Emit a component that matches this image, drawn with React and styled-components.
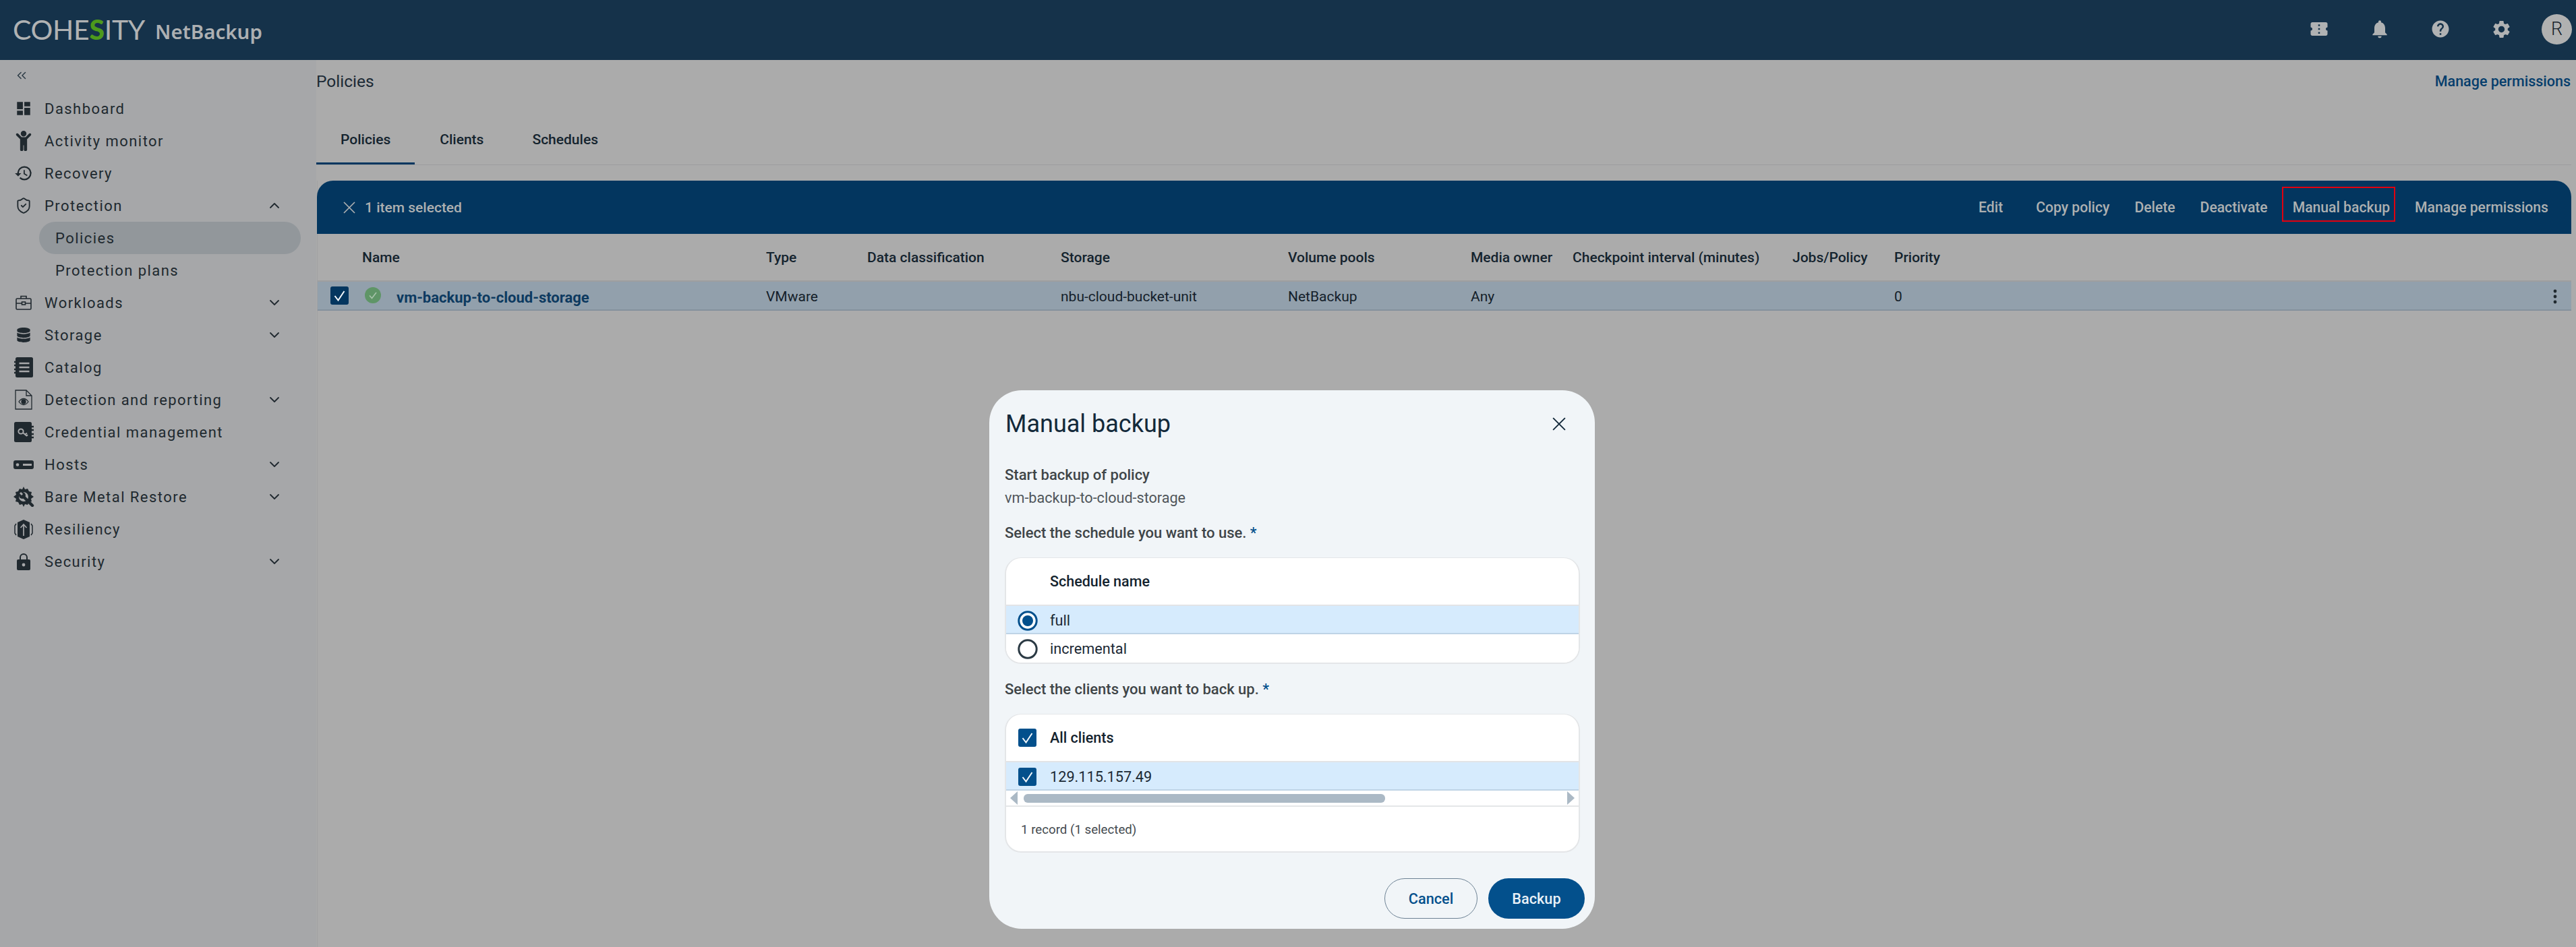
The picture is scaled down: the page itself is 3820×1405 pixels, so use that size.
import React from "react";
import styled, { createGlobalStyle } from "styled-components";
import { MdDashboard, MdHistory, MdConfirmationNumber, MdNotifications, MdHelp, MdSettings } from "react-icons/md";
import { FaDatabase, FaChild } from "react-icons/fa";
import { ChevronDown, ChevronUp, ChevronsLeft, ShieldCheck } from "lucide-react";

const Global = createGlobalStyle`
  html, body { margin: 0; padding: 0; }
  body { font-family: Roboto, "Liberation Sans", sans-serif; background: #ababab; }
  * { box-sizing: border-box; }
`;

const Page = styled.div`
  position: relative; width: 3820px; height: 1405px; overflow: hidden;
  display: flex; flex-direction: column; background: #ababab; color: #20292f;
`;
const TopBar = styled.header`
  height: 89px; flex: none; background: #15324a; display: flex; align-items: center;
  padding: 0 6px 0 19px; color: #adb0b2;
`;
const Logo = styled.div`
  font-family: Lato, sans-serif; font-size: 41px; font-weight: 400; letter-spacing: -.3px; line-height: 1;
  margin-top: -3px; color: #b0b2b3;
`;
const LogoS = styled.span` color: #4d9a1c; font-weight: 900; `;
const Product = styled.div`
  font-family: "Noto Sans", sans-serif; font-size: 29.5px; font-weight: 600; margin-left: 15px; margin-top: 3px;
`;
const TopIcons = styled.div` margin-left: auto; display: flex; align-items: center; `;
const TopIcon = styled.span`
  display: flex; width: 90px; justify-content: center; color: #b0b2b3; margin-top: -3px;
`;
const Avatar = styled.div`
  width: 45px; height: 45px; border-radius: 50%; background: #b0b1b1; color: #16222b;
  display: flex; align-items: center; justify-content: center; font-size: 27px; font-weight: 300; margin-left: 15px; margin-top: -3px;
`;
const Body = styled.div` flex: 1; display: flex; min-height: 0; `;
const Side = styled.nav` width: 469px; flex: none; background: #a6a7a9; `;
const Collapse = styled.div` height: 48px; padding: 0 0 2px 21px; display: flex; align-items: center; color: #2b3a44; `;
const NavRow = styled.div`
  height: 48px; display: flex; align-items: center; padding: 0 50px 0 16px; font-size: 22px; letter-spacing: 1.45px; color: #20292f;
`;
const NavIcon = styled.span` width: 38px; display: flex; justify-content: center; margin-right: 12px; color: #20292f; `;
const Caret = styled.span` margin-left: auto; width: 24px; display: flex; justify-content: center; color: #20292f; `;
const SubRow = styled.div`
  height: 48px; margin: 0 23px 0 58px; padding-left: 24px; display: flex; align-items: center; border-radius: 24px;
  font-size: 22px; letter-spacing: 1.45px; background: ${p => (p.$active ? "#92979b" : "transparent")};
`;
const Main = styled.main` flex: 1; min-width: 0; padding-right: 7px; display: flex; flex-direction: column; `;
const TitleRow = styled.div` height: 62px; display: flex; align-items: center; justify-content: space-between; `;
const Title = styled.h1` margin: 0; font-size: 24.5px; font-weight: 400; color: #1c2a35; `;
const Link = styled.a` font-size: 21.5px; font-weight: 500; color: #063e6c; margin-right: 1px; `;
const Tabs = styled.div` margin-top: 21px; height: 73px; display: flex; border-bottom: 1px solid #9c9d9f; `;
const Tab = styled.div`
  padding: 0 36px; height: 72px; margin-right: ${p => (p.$active ? "1px" : "0")}; display: flex; align-items: center; font-size: 21px; font-weight: 500; color: #14232e;
  border-bottom: 3px solid ${p => (p.$active ? "#03365f" : "transparent")};
  margin-bottom: -1px;
`;
const Panel = styled.section` margin-top: 23px; margin-left: 1px; flex: 1; border-left: 1px solid #a0a1a3; `;
const SelectBar = styled.div`
  height: 79px; background: #03365f; border-radius: 24px 24px 0 0; margin-left: -1px; display: flex; align-items: center;
  padding: 0 34px 0 39px; color: #adb0b1; font-size: 21px;
`;
const Selected = styled.div` display: flex; align-items: center; gap: 14px; font-weight: 500; `;
const Actions = styled.div` margin-left: auto; display: flex; gap: 37px; align-items: center; font-size: 21.15px; `;
const Action = styled.span`
  position: relative; font-weight: 500; line-height: 32px; margin-right: ${p => (p.$spaced ? "12px" : 0)};
  ${p => p.$marked && `&::after { content: ""; position: absolute; left: -16px; right: -8px; top: -15px; bottom: -5px; border: 2px solid #e2000f; }`}
`;
const Cols = "66px 599px 150px 287px 337px 271px 151px 326px 151px 1fr 60px";
const HeadGrid = styled.div`
  height: 71px; display: grid; grid-template-columns: ${Cols}; align-items: center; font-size: 21px; font-weight: 500; color: #14232e;
  border-bottom: 2px solid #9d9e9f;
`;
const RowGrid = styled.div`
  height: 43px; padding-top: 2px; display: grid; grid-template-columns: ${Cols}; align-items: center; font-size: 21px; color: #14202a;
  background: #92a0ac; border-bottom: 2px solid #84919d;
`;
const SelectCell = styled.div` padding-left: 19px; display: flex; margin-top: -2px; `;
const NameCell = styled.div` display: flex; align-items: center; gap: 23px; padding-left: 4px; `;
const NameLink = styled.span` font-size: 22px; font-weight: 700; color: #0d3a60; margin-top: 4px; `;
const MoreCell = styled.div` display: flex; justify-content: flex-end; padding-right: 21px; color: #20292f; `;

const Modal = styled.div`
  position: absolute; left: 1467px; top: 579px; width: 898px; height: 799px; border-radius: 48px;
  background: #f1f5f8; padding: 0 22px 0 23px; display: flex; flex-direction: column;
`;
const ModalHead = styled.div` height: 100px; display: flex; align-items: center; justify-content: space-between; padding: 0 21px 0 1px; `;
const ModalTitle = styled.h2` margin: 0; font-size: 36px; font-weight: 400; color: #13293a; `;
const Label = styled.div`
  line-height: 34px; font-size: 22px; font-weight: 500; color: #3f4548; margin-top: ${p => p.$mt || 0}px;
`;
const Req = styled.span` color: #03508c; `;
const Value = styled.div` line-height: 34px; font-size: 21.6px; color: #50565a; `;
const Card = styled.div`
  margin-top: 19px; background: #fff; border: 2px solid #e4e6e8; border-top-width: 1px; border-radius: 24px; overflow: hidden;
`;
const CardHead = styled.div`
  height: 71px; display: flex; align-items: center; font-size: 21.5px; font-weight: 500; color: #14232e;
  padding-left: ${p => (p.$check ? "18px" : "65px")}; gap: 20px; border-bottom: 2px solid #e2e4e6;
`;
const CardRow = styled.div`
  height: 42px; display: flex; align-items: center; font-size: 21.7px; color: #1c2a35;
  padding: ${p => (p.$on ? "3px" : "1px")} 0 0 ${p => (p.$box ? "18px" : "17px")}; gap: ${p => (p.$box ? "20px" : "18px")};
  background: ${p => (p.$on ? "#d6ebfd" : "#fff")};
  border-bottom: ${p => (p.$on ? "2px solid #bfd4e6" : "none")};
`;
const ScrollBar = styled.div`
  height: 24px; display: flex; align-items: center; padding: 0 6px; border-bottom: 2px solid #e4e6e8; gap: 9px;
`;
const Thumb = styled.div` width: 536px; height: 13px; border-radius: 6px; background: #abb9c5; `;
const ScrollEnd = styled.svg` margin-left: ${p => (p.$end ? "auto" : 0)}; `;
const Records = styled.div` height: 66px; padding: 2px 0 0 22px; display: flex; align-items: center; font-size: 18.7px; color: #444b50; `;
const Footer = styled.div` margin-top: 38px; display: flex; justify-content: flex-end; gap: 16px; margin-right: -7px; `;
const Btn = styled.button`
  height: 60px; width: ${p => p.$w}px; border-radius: 30px; font: 500 21.7px Roboto, sans-serif; padding: 0;
  border: ${p => (p.$primary ? "none" : "1px solid #6d8294")}; color: ${p => (p.$primary ? "#e9f1f7" : "#03508c")};
  background: ${p => (p.$primary ? "#03508c" : "transparent")};
`;
const BoxTick = styled.svg` flex: none; display: block; `;
const StatusMark = styled.svg` flex: none; margin-top: -4px; `;

const Check = ({ color = "#03508c", size = 27 }) => (
  <BoxTick width={size} height={size} viewBox="0 0 27 27">
    <rect width="27" height="27" rx="3" fill={color} />
    <path d="M6.5 14l5 6.5L20.5 7" fill="none" stroke="#f4f8fb" strokeWidth="2" />
  </BoxTick>
);
const Radio = ({ on }) => (
  <BoxTick width="30" height="30" viewBox="0 0 30 30">
    <circle cx="15" cy="15" r="13.2" fill="#fff" stroke={on ? "#03508c" : "#2b3a44"} strokeWidth="3" />
    {on && <circle cx="15" cy="15" r="8" fill="#03508c" />}
  </BoxTick>
);
const Cross = ({ s = 18, c = "currentColor" }) => (
  <svg width={s} height={s} viewBox="0 0 18 18"><path d="M1 1l16 16M17 1L1 17" stroke={c} strokeWidth="1.7" fill="none" /></svg>
);
const Status = () => (
  <StatusMark width="24" height="24" viewBox="0 0 24 24">
    <circle cx="12" cy="12" r="12" fill="#5f9567" />
    <path d="M7 12.5l3.5 4L17 8" stroke="#a9c4ac" strokeWidth="1.6" fill="none" />
  </StatusMark>
);
const Kebab = () => (
  <svg width="6" height="22" viewBox="0 0 6 22"><circle cx="3" cy="3" r="2.4" fill="#20292f" /><circle cx="3" cy="11" r="2.4" fill="#20292f" /><circle cx="3" cy="19" r="2.4" fill="#20292f" /></svg>
);
const Briefcase = () => (
  <svg width="24" height="22" viewBox="0 0 24 22" fill="none" stroke="#20292f" strokeWidth="1.6">
    <rect x="1" y="5" width="22" height="16" rx="1.5" /><path d="M8 5V1.5h8V5M1 12h8.5M14.5 12H23" /><rect x="9.5" y="10" width="5" height="4" />
  </svg>
);
const Catalog = () => (
  <svg width="28" height="30" viewBox="0 0 28 30">
    <rect x="2" y="0" width="26" height="30" rx="2.5" fill="#20292f" />
    <path d="M0 7h4M0 12h4M0 18h4M0 23h4" stroke="#20292f" strokeWidth="2.4" />
    <path d="M7.5 9h15M7.5 15h15M7.5 21h15" stroke="#a6a7a9" strokeWidth="2.6" />
  </svg>
);
const DocEye = () => (
  <svg width="26" height="30" viewBox="0 0 26 30" fill="none" stroke="#20292f" strokeWidth="1.3">
    <path d="M1 1h16l8 8v20H1zM17 1v8h8" />
    <path d="M6 18c4-6 10-6 14 0-4 6-10 6-14 0z" /><circle cx="13" cy="18" r="3" fill="#20292f" />
  </svg>
);
const KeyBook = () => (
  <svg width="29" height="30" viewBox="0 0 29 30">
    <rect x="0" y="0" width="26" height="30" rx="2.5" fill="#20292f" />
    <path d="M26 7h3M26 12h3M26 18h3M26 23h3" stroke="#20292f" strokeWidth="2.4" />
    <circle cx="10" cy="14" r="3.6" fill="none" stroke="#a6a7a9" strokeWidth="2" />
    <path d="M13 16l6 5M16.5 18.5l2.5-2M18.5 20.5l1.5-1.5" stroke="#a6a7a9" strokeWidth="2" />
  </svg>
);
const HostBar = () => (
  <svg width="30" height="13" viewBox="0 0 30 13">
    <rect width="30" height="13" rx="3" fill="#20292f" /><circle cx="6" cy="6.5" r="2.3" fill="#a6a7a9" /><rect x="14" y="5" width="13" height="3" fill="#a6a7a9" />
  </svg>
);
const GearWrench = () => (
  <svg width="31" height="30" viewBox="0 0 31 30">
    <path d="M15 0l2 4 4-1 2 4 4 1-1 4 4 3-4 3 1 4-4 1-2 4-4-1-2 4-2-4-4 1-2-4-4-1 1-4-4-3 4-3-1-4 4-1 2-4 4 1z" fill="#20292f" />
    <circle cx="15" cy="15" r="7" fill="#a6a7a9" />
    <circle cx="13" cy="13" r="5" fill="#20292f" />
    <path d="M10 9l3 3" stroke="#a6a7a9" strokeWidth="3" />
    <path d="M16 16l12 12" stroke="#20292f" strokeWidth="4.4" strokeLinecap="round" />
  </svg>
);
const Resilience = () => (
  <svg width="28" height="29" viewBox="0 0 28 29">
    <path d="M14 0l9 4v21l-9 4-9-4V4z" fill="#20292f" />
    <path d="M14 24V7M9.5 12L14 7l4.5 5" stroke="#a6a7a9" strokeWidth="1.7" fill="none" />
    <path d="M3 6L1 9v11l2 3M25 6l2 3v11l-2 3" stroke="#20292f" strokeWidth="1.5" fill="none" />
  </svg>
);
const Lock = () => (
  <svg width="20" height="25" viewBox="0 0 20 25">
    <path d="M5 10V6a5 5 0 0 1 10 0v4" fill="none" stroke="#20292f" strokeWidth="2" />
    <rect y="9" width="20" height="16" rx="2" fill="#20292f" /><circle cx="10" cy="17" r="2.4" fill="#a6a7a9" />
  </svg>
);

const nav = [
  { t: "Dashboard", i: <MdDashboard size={26} /> },
  { t: "Activity monitor", i: <FaChild size={30} /> },
  { t: "Recovery", i: <MdHistory size={28} /> },
  { t: "Protection", i: <ShieldCheck size={26} strokeWidth={1.7} />, c: "up" },
  { sub: "Policies", active: true },
  { sub: "Protection plans" },
  { t: "Workloads", i: <Briefcase />, c: "down" },
  { t: "Storage", i: <FaDatabase size={22} />, c: "down" },
  { t: "Catalog", i: <Catalog /> },
  { t: "Detection and reporting", i: <DocEye />, c: "down" },
  { t: "Credential management", i: <KeyBook /> },
  { t: "Hosts", i: <HostBar />, c: "down" },
  { t: "Bare Metal Restore", i: <GearWrench />, c: "down" },
  { t: "Resiliency", i: <Resilience /> },
  { t: "Security", i: <Lock />, c: "down" },
];

const heads = ["Type", "Data classification", "Storage", "Volume pools", "Media owner", "Checkpoint interval (minutes)", "Jobs/Policy", "Priority"];
const cells = ["VMware", "", "nbu-cloud-bucket-unit", "NetBackup", "Any", "", "", "0"];

export default function App() {
  return (
    <Page>
      <Global />
      <TopBar>
        <Logo>COHE<LogoS>S</LogoS>ITY</Logo>
        <Product>NetBackup</Product>
        <TopIcons>
          <TopIcon><MdConfirmationNumber size={30} /></TopIcon>
          <TopIcon><MdNotifications size={32} /></TopIcon>
          <TopIcon><MdHelp size={30} /></TopIcon>
          <TopIcon><MdSettings size={31} /></TopIcon>
          <Avatar>R</Avatar>
        </TopIcons>
      </TopBar>
      <Body>
        <Side>
          <Collapse><ChevronsLeft size={22} strokeWidth={1.6} /></Collapse>
          {nav.map(n =>
            n.sub ? (
              <SubRow key={n.sub} $active={n.active}>{n.sub}</SubRow>
            ) : (
              <NavRow key={n.t}>
                <NavIcon>{n.i}</NavIcon>
                {n.t}
                {n.c && <Caret>{n.c === "up" ? <ChevronUp size={24} strokeWidth={1.8} /> : <ChevronDown size={24} strokeWidth={1.8} />}</Caret>}
              </NavRow>
            )
          )}
        </Side>
        <Main>
          <TitleRow>
            <Title>Policies</Title>
            <Link>Manage permissions</Link>
          </TitleRow>
          <Tabs>
            <Tab $active>Policies</Tab>
            <Tab>Clients</Tab>
            <Tab>Schedules</Tab>
          </Tabs>
          <Panel>
            <SelectBar>
              <Selected><Cross />1 item selected</Selected>
              <Actions>
                <Action $spaced>Edit</Action>
                <Action>Copy policy</Action>
                <Action>Delete</Action>
                <Action>Deactivate</Action>
                <Action $marked>Manual backup</Action>
                <Action>Manage permissions</Action>
              </Actions>
            </SelectBar>
            <HeadGrid>
              <span />
              <span>Name</span>
              {heads.map(h => <span key={h}>{h}</span>)}
            </HeadGrid>
            <RowGrid>
              <SelectCell><Check color="#03365f" /></SelectCell>
              <NameCell><Status /><NameLink>vm-backup-to-cloud-storage</NameLink></NameCell>
              {cells.map((c, i) => <span key={i}>{c}</span>)}
              <MoreCell><Kebab /></MoreCell>
            </RowGrid>
          </Panel>
        </Main>
      </Body>
      <Modal>
        <ModalHead>
          <ModalTitle>Manual backup</ModalTitle>
          <Cross s={20} c="#13293a" />
        </ModalHead>
        <Label $mt={9}>Start backup of policy</Label>
        <Value>vm-backup-to-cloud-storage</Value>
        <Label $mt={18}>Select the schedule you want to use. <Req>*</Req></Label>
        <Card>
          <CardHead>Schedule name</CardHead>
          <CardRow $on><Radio on />full</CardRow>
          <CardRow><Radio />incremental</CardRow>
        </Card>
        <Label $mt={21}>Select the clients you want to back up. <Req>*</Req></Label>
        <Card>
          <CardHead $check><Check />All clients</CardHead>
          <CardRow $on $box><Check />129.115.157.49</CardRow>
          <ScrollBar>
            <svg width="11" height="24" viewBox="0 0 11 24"><path d="M11 2v20L0 12z" fill="#abb9c5" /></svg>
            <Thumb />
            <ScrollEnd $end width="11" height="24" viewBox="0 0 11 24"><path d="M0 2v20l11-10z" fill="#abb9c5" /></ScrollEnd>
          </ScrollBar>
          <Records>1 record (1 selected)</Records>
        </Card>
        <Footer>
          <Btn $w={138}>Cancel</Btn>
          <Btn $w={143} $primary>Backup</Btn>
        </Footer>
      </Modal>
    </Page>
  );
}
